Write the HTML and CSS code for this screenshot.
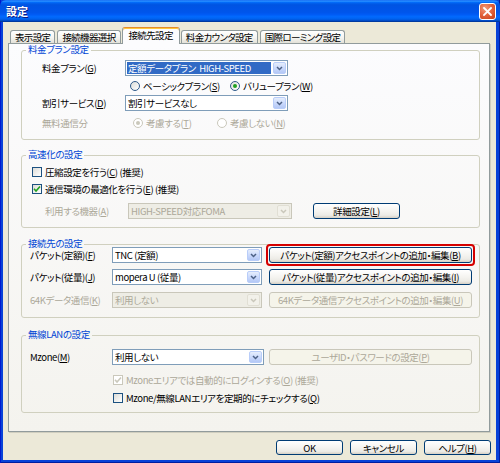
FILE: index.html
```html
<!DOCTYPE html>
<html lang="ja">
<head>
<meta charset="utf-8">
<title>設定</title>
<link rel="stylesheet" href="styles.css">
</head>
<body>
<div class="window">
  <div class="titlebar">
    <span class="title">設定</span>
    <span class="close"><svg width="9" height="9" viewBox="0 0 9 9"><path d="M1 1 L8 8 M8 1 L1 8" stroke="#fff" stroke-width="1.8" stroke-linecap="square"/></svg></span>
  </div>
  <div class="client">
    <div class="tabs">
      <div class="tab">表示設定</div>
      <div class="tab">接続機器選択</div>
      <div class="tab selected">接続先設定</div>
      <div class="tab">料金カウンタ設定</div>
      <div class="tab">国際ローミング設定</div>
    </div>
    <div class="panel">
      <fieldset class="group g1">
        <legend>料金プラン設定</legend>
        <div class="row field mt3 pl20">
          <span class="lbl w83">料金プラン(<u>G</u>)</span>
          <div class="combo w163"><span class="value sel">定額データプラン  HIGH-SPEED</span><span class="drop"><svg width="7" height="5" viewBox="0 0 7 5"><path d="M1 1 L3.5 3.5 L6 1" stroke="#4D6185" stroke-width="1.5" fill="none"/></svg></span></div>
        </div>
        <div class="row opt mt3 pl108">
          <span class="choice w100"><span class="rb"></span>ベーシックプラン(<u>S</u>)</span>
          <span class="choice"><span class="rb on"></span>バリュープラン(<u>W</u>)</span>
        </div>
        <div class="row field mt2 pl20">
          <span class="lbl w83">割引サービス(<u>D</u>)</span>
          <div class="combo w163"><span class="value">割引サービスなし</span><span class="drop"><svg width="7" height="5" viewBox="0 0 7 5"><path d="M1 1 L3.5 3.5 L6 1" stroke="#4D6185" stroke-width="1.5" fill="none"/></svg></span></div>
        </div>
        <div class="row opt mt5 pl20 gray">
          <span class="lbl w83">無料通信分</span>
          <span class="choice w84 ml8"><span class="rb off on"></span>考慮する(<u>T</u>)</span>
          <span class="choice"><span class="rb off"></span>考慮しない(<u>N</u>)</span>
        </div>
      </fieldset>

      <fieldset class="group g2">
        <legend>高速化の設定</legend>
        <div class="row opt mt3 pl10">
          <span class="choice"><span class="cb"></span>圧縮設定を行う(<u>C</u>) (推奨)</span>
        </div>
        <div class="row opt mt3 pl10">
          <span class="choice"><span class="cb"><svg width="8" height="8" viewBox="0 0 8 8"><path d="M1 3.8 L3 6 L7 1.5" stroke="#21A121" stroke-width="1.6" fill="none"/></svg></span>通信環境の最適化を行う(<u>E</u>) (推奨)</span>
        </div>
        <div class="row field mt7 pl23">
          <span class="lbl w83 gray">利用する機器(<u>A</u>)</span>
          <div class="combo off w164"><span class="value">HIGH-SPEED対応FOMA</span><span class="drop"><svg width="7" height="5" viewBox="0 0 7 5"><path d="M1 1 L3.5 3.5 L6 1" stroke="#C9C7BA" stroke-width="1.5" fill="none"/></svg></span></div>
          <span class="btn w87 ml21">詳細設定(<u>L</u>)</span>
        </div>
      </fieldset>

      <fieldset class="group g3">
        <legend>接続先の設定</legend>
        <div class="row field mtn4 pl8">
          <span class="lbl w82">パケット(定額)(<u>F</u>)</span>
          <div class="combo w150"><span class="value">TNC (定額)</span><span class="drop"><svg width="7" height="5" viewBox="0 0 7 5"><path d="M1 1 L3.5 3.5 L6 1" stroke="#4D6185" stroke-width="1.5" fill="none"/></svg></span></div>
          <span class="highlight"><span class="btn w203">パケット(定額)アクセスポイントの追加・編集(<u>B</u>)</span></span>
        </div>
        <div class="row field mt6 pl8">
          <span class="lbl w82">パケット(従量)(<u>J</u>)</span>
          <div class="combo w150"><span class="value">mopera U (従量)</span><span class="drop"><svg width="7" height="5" viewBox="0 0 7 5"><path d="M1 1 L3.5 3.5 L6 1" stroke="#4D6185" stroke-width="1.5" fill="none"/></svg></span></div>
          <span class="btn w203 ml7">パケット(従量)アクセスポイントの追加・編集(<u>I</u>)</span>
        </div>
        <div class="row field mt7 pl8">
          <span class="lbl w82 gray">64Kデータ通信(<u>K</u>)</span>
          <div class="combo off w150"><span class="value">利用しない</span><span class="drop"><svg width="7" height="5" viewBox="0 0 7 5"><path d="M1 1 L3.5 3.5 L6 1" stroke="#C9C7BA" stroke-width="1.5" fill="none"/></svg></span></div>
          <span class="btn off w203 ml7">64Kデータ通信アクセスポイントの追加・編集(<u>U</u>)</span>
        </div>
      </fieldset>

      <fieldset class="group g4">
        <legend>無線LANの設定</legend>
        <div class="row field mt7 pl8">
          <span class="lbl w82">Mzone(<u>M</u>)</span>
          <div class="combo w152"><span class="value">利用しない</span><span class="drop"><svg width="7" height="5" viewBox="0 0 7 5"><path d="M1 1 L3.5 3.5 L6 1" stroke="#4D6185" stroke-width="1.5" fill="none"/></svg></span></div>
          <span class="btn off w203 ml5">ユーザID・パスワードの設定(<u>P</u>)</span>
        </div>
        <div class="row opt mt8 pl91 gray">
          <span class="choice"><span class="cb off"><svg width="8" height="8" viewBox="0 0 8 8"><path d="M1 3.8 L3 6 L7 1.5" stroke="#CAC8BB" stroke-width="1.6" fill="none"/></svg></span>Mzoneエリアでは自動的にログインする(<u>O</u>) (推奨)</span>
        </div>
        <div class="row opt mt4 pl91">
          <span class="choice"><span class="cb"></span>Mzone/無線LANエリアを定期的にチェックする(<u>Q</u>)</span>
        </div>
      </fieldset>
    </div>
    <div class="footer">
      <span class="btn fbtn">OK</span>
      <span class="btn fbtn">キャンセル</span>
      <span class="btn fbtn">ヘルプ(<u>H</u>)</span>
    </div>
  </div>
</div>
</body>
</html>
```

FILE: styles.css
```css
* { box-sizing: border-box; }
html, body { margin: 0; padding: 0; }
body {
  width: 500px;
  height: 463px;
  overflow: hidden;
  font-family: "Noto Sans CJK JP", "Noto Sans", sans-serif;
  font-size: 9.5px;
  letter-spacing: -0.4px;
  font-feature-settings: "palt";
  color: #000;
  background: #ECE9D8;
}
u { text-underline-offset: 1px; }

.window {
  width: 500px;
  height: 463px;
  display: flex;
  flex-direction: column;
  background: #0842D8;
  box-shadow: inset 1px 0 0 #0019CF, inset -1px 0 0 #001EA0, inset 0 -1px 0 #001EA0;
}
.titlebar {
  flex: none;
  height: 22px;
  display: flex;
  align-items: center;
  justify-content: space-between;
  padding: 0 4px 0 6px;
  background: linear-gradient(#0058EE 0%, #3593FF 4%, #288EFF 6%, #127DFF 8%, #036FFC 10%, #0262EE 14%, #0057E5 20%, #0054E3 24%, #0055EB 56%, #005BF5 66%, #026AFE 76%, #0062EF 86%, #0052D6 92%, #0040AB 96%, #003092 100%);
  border-radius: 6px 6px 0 0;
}
.title {
  color: #fff;
  font-weight: bold;
  font-size: 11px;
  letter-spacing: 0;
  text-shadow: 1px 1px 0 #0A1883;
}
.close {
  width: 17px;
  height: 17px;
  border: 1px solid #fff;
  border-radius: 3px;
  background: radial-gradient(circle at 35% 30%, #F29A7A 0%, #E2623B 50%, #C23D16 100%);
  display: flex;
  align-items: center;
  justify-content: center;
}

.client {
  flex: 1;
  margin: 0 4px 3px 3px;
  background: #ECE9D8;
  display: flex;
  flex-direction: column;
}

.tabs {
  flex: none;
  height: 22px;
  display: flex;
  align-items: flex-end;
  gap: 2px;
  padding-left: 7px;
}
.tab {
  height: 13px;
  margin-bottom: 1px;
  padding: 0 4px;
  border: 1px solid #919B9C;
  border-bottom: none;
  border-radius: 3px 3px 0 0;
  background: linear-gradient(#FFFFFF, #F3F3EF 60%, #E3E1D8);
  line-height: 12px;
  letter-spacing: -0.65px;
  white-space: nowrap;
}
.tab.selected {
  position: relative;
  z-index: 1;
  height: 17px;
  margin: 0 -1px;
  padding: 1px 6px 0;
  border-top: 1px solid #E68B2C;
  box-shadow: inset 0 1px 0 #FFC83C;
  background: #FCFCFE;
}

.panel {
  flex: none;
  height: 389px;
  margin: -1px 6px 0 5px;
  border: 1px solid #919B9C;
  background: linear-gradient(#FCFCFE, #F4F3EE);
  box-shadow: 1px 1px 0 #D0CEBF;
}

.group {
  width: 459px;
  margin: 0 0 0 12px;
  padding: 0;
  border: 1px solid #D0D0BF;
  border-radius: 3px;
  min-width: 0;
}
.group legend {
  margin-left: 4px;
  padding: 0 2px 3px;
  line-height: 10px;
  color: #0046D5;
}
.g1 { margin-top: 0; padding-bottom: 9px; }
.g2 { margin-top: 9px; padding-bottom: 8px; }
.g3 { margin-top: 10px; padding-bottom: 9px; }
.g4 { margin-top: 11px; padding-bottom: 7px; }

.row { display: flex; align-items: center; white-space: nowrap; }
.row.field { height: 16px; }
.row.opt { height: 14px; }

.mt2 { margin-top: 2px; }
.mt3 { margin-top: 3px; }
.mt4 { margin-top: 4px; }
.mt5 { margin-top: 5px; }
.mt6 { margin-top: 6px; }
.mt7 { margin-top: 7px; }
.mt8 { margin-top: 8px; }
.mtn4 { margin-top: -4px; }
.pl8 { padding-left: 8px; }
.pl10 { padding-left: 10px; }
.pl20 { padding-left: 20px; }
.pl23 { padding-left: 23px; }
.pl91 { padding-left: 91px; }
.pl108 { padding-left: 108px; }
.ml5 { margin-left: 5px; }
.ml7 { margin-left: 7px; }
.ml8 { margin-left: 8px; }
.ml21 { margin-left: 21px; }
.w82 { width: 82px; }
.w83 { width: 83px; }
.w84 { width: 84px; }
.w87 { width: 87px; }
.w100 { width: 100px; }
.w150 { width: 150px; }
.w152 { width: 152px; }
.w163 { width: 163px; }
.w164 { width: 164px; }
.w203 { width: 203px; }

.lbl { flex: none; line-height: 10px; }
.gray, .gray .lbl { color: #ACA899; }

.combo {
  flex: none;
  height: 16px;
  display: flex;
  align-items: center;
  padding: 1px;
  border: 1px solid #7F9DB9;
  background: #fff;
}
.combo .value {
  flex: 1;
  height: 12px;
  line-height: 12px;
  padding-left: 1px;
  margin-right: 2px;
  white-space: pre;
  overflow: hidden;
}
.combo .value.sel { background: #316AC5; color: #fff; }
.drop {
  flex: none;
  width: 13px;
  height: 12px;
  display: flex;
  align-items: center;
  justify-content: center;
  border: 1px solid #B9CDF9;
  border-radius: 2px;
  background: linear-gradient(#E6EEFC, #CBDAFC 50%, #B4C8F6);
}
.combo.off { border-color: #C9C7BA; background: #EEEDE5; color: #ACA899; }
.combo.off .drop { border-color: #E1DFD4; background: #F2F1EA; }

.btn {
  flex: none;
  height: 16px;
  display: flex;
  align-items: center;
  justify-content: center;
  border: 1px solid #003C74;
  border-radius: 3px;
  background: linear-gradient(#FFFFFF, #F5F4F0 50%, #ECEBE6 80%, #D6D0C5);
  line-height: 12px;
  white-space: nowrap;
}
.btn.off {
  border-color: #C9C7BA;
  background: #F5F4EA;
  color: #ACA899;
}
.highlight {
  flex: none;
  display: flex;
  padding: 1px;
  border: 2px solid #D40000;
  border-radius: 4px;
  margin: -3px 0 -3px 4px;
}

.choice { display: flex; align-items: center; flex: none; line-height: 12px; }
.cb, .rb {
  flex: none;
  width: 10px;
  height: 10px;
  margin-right: 3px;
  border: 1px solid #1C5180;
  background: linear-gradient(135deg, #DCDCD7, #FFFFFF);
  display: flex;
  align-items: center;
  justify-content: center;
}
.rb { border-radius: 50%; border-color: #2F5A8A; }
.rb.on::after {
  content: "";
  width: 4px;
  height: 4px;
  border-radius: 50%;
  background: #21A121;
}
.cb.off, .rb.off { border-color: #CAC8BB; background: #FFFFFF; }
.rb.off.on::after { background: #CAC8BB; }

.footer {
  display: flex;
  justify-content: flex-end;
  gap: 7px;
  margin-top: 8px;
  padding-right: 5px;
}
.fbtn { width: 67px; height: 15px; }
```
